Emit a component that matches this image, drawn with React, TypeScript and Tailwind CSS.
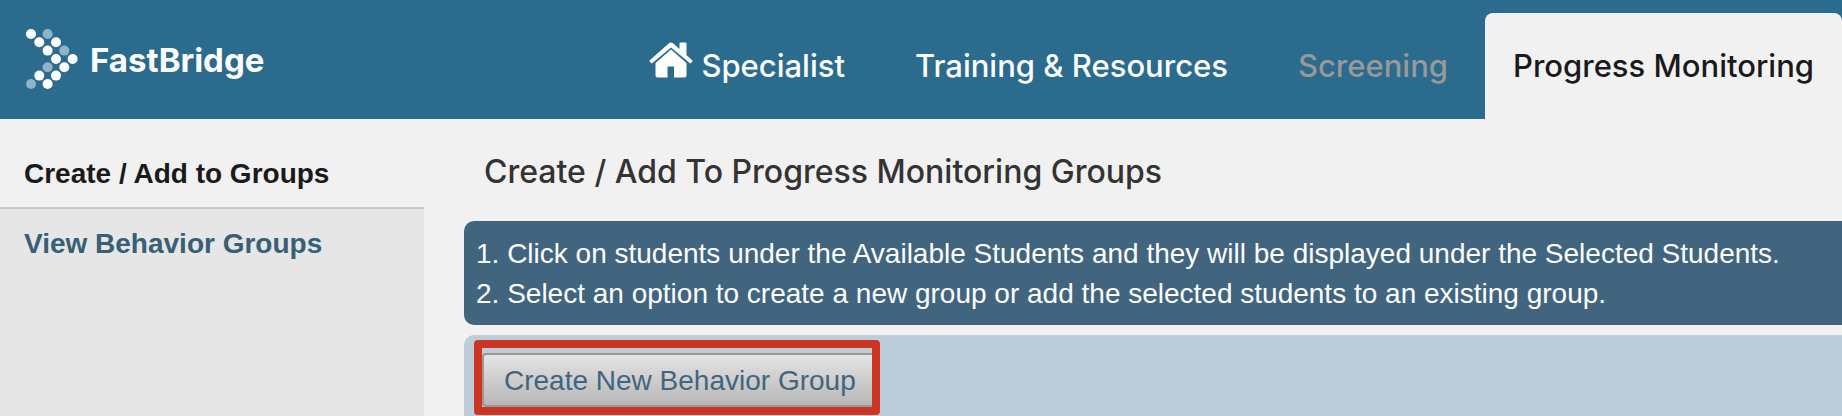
import React from "react";

const solidDots: [number, number][] = [
  [5, 5], [13.3, 13.3], [30, 13.3], [21.6, 21.6], [30, 30], [46.6, 30],
  [38.3, 38.3], [13.3, 46.6], [30, 46.6], [21.6, 55],
];
const fadedDots: [number, number][] = [[21.6, 5], [38.3, 21.6], [21.6, 38.3], [5, 55]];

function LogoMark() {
  return (
    <svg viewBox="0 0 52 60" className="h-[60px] w-[52px] shrink-0" aria-hidden="true">
      {solidDots.map(([x, y]) => (
        <circle key={`${x}-${y}`} cx={x} cy={y} r="5" fill="#ffffff" />
      ))}
      {fadedDots.map(([x, y]) => (
        <circle key={`${x}-${y}`} cx={x} cy={y} r="5" fill="#8fb4c8" />
      ))}
    </svg>
  );
}

function HomeIcon() {
  return (
    <svg viewBox="0 0 44 36" className="mb-3 h-9 w-11 shrink-0" fill="#ffffff" aria-hidden="true">
      <path d="M22 7.600 37.500 21V33.500c0 1.200-.8 2-2 2H25V24.500h-6.500v11H8.500c-1.200 0-2-.8-2-2V21z" />
      <path d="M20 1.300c1.200-1.100 2.800-1.100 4 0L30.500 7V1.500c0-.6.400-1 1-1h5c.6 0 1 .4 1 1v11.700l5.700 5c.5.400.5.900.1 1.400l-1.300 1.300c-.4.400-.9.400-1.400 0L22 5.600 3.400 20.900c-.5.400-1 .4-1.400 0L.7 19.600c-.4-.5-.4-1 .1-1.400z" />
    </svg>
  );
}

export default function App() {
  return (
    <div className="flex h-screen flex-col overflow-hidden bg-[#f1f1f1] font-['Liberation_Sans',Arial,sans-serif] text-[28px] leading-10">
      <header className="flex h-[119px] shrink-0 items-end justify-between bg-[#2b6b8e] pl-[26px]">
        <a href="#home" className="flex items-center gap-3 pb-[30px] text-white">
          <LogoMark />
          <span className="pt-[2px] font-['Inter',sans-serif] text-[33px] font-bold">FastBridge</span>
        </a>
        <nav className="flex h-[106px] shrink-0 gap-1 whitespace-nowrap font-['Inter',sans-serif] text-[31px] font-medium text-white">
          <a href="#specialist" className="flex items-center gap-2 px-[33px]">
            <HomeIcon />
            Specialist
          </a>
          <a href="#training" className="flex items-center px-[33px]">Training &amp; Resources</a>
          <a href="#screening" className="flex items-center px-[33px] text-[#999999]">Screening</a>
          <a href="#progress" aria-current="page" className="flex items-center rounded-t-lg bg-[#f1f1f1] px-7 text-[#1a1a1a]">
            Progress Monitoring
          </a>
        </nav>
      </header>

      <div className="flex grow">
        <aside className="w-[424px] shrink-0 bg-[#e6e6e6] font-bold">
          <a href="#create" className="block border-b-2 border-[#c8c8c8] bg-[#f1f1f1] px-6 pt-[35px] pb-[13px]">
            <span className="text-[#1a1a1a]">Create / Add to Groups</span>
          </a>
          <a href="#view" className="block px-6 py-[15px] text-[#375f75]">View Behavior Groups</a>
        </aside>

        <main className="ml-10 flex grow flex-col">
          <h1 className="px-5 pt-[33px] pb-[29px] font-['Inter',sans-serif] text-[32px] font-medium text-[#333333]">
            Create / Add To Progress Monitoring Groups
          </h1>
          <ol className="list-inside list-decimal rounded-l-[10px] bg-[#41657f] px-3 pt-[13px] pb-[11px] text-white">
            <li>Click on students under the Available Students and they will be displayed under the Selected Students.</li>
            <li>Select an option to create a new group or add the selected students to an existing group.</li>
          </ol>
          <section className="mt-[10px] grow rounded-tl-[10px] bg-[#bdcdda] pl-[10px] pt-[5px]">
            <div className="inline-block rounded border-8 border-[#cc3522] pt-[5px] align-top">
              <button type="button" className="block rounded-l-sm border-2 border-r-0 border-[#999999] bg-linear-to-b from-[#e4e4e4] to-[#b7b7b7] pt-[6px] pr-4 pb-1 pl-5 text-[#41657f]">
                Create New Behavior Group
              </button>
            </div>
          </section>
        </main>
      </div>
    </div>
  );
}
